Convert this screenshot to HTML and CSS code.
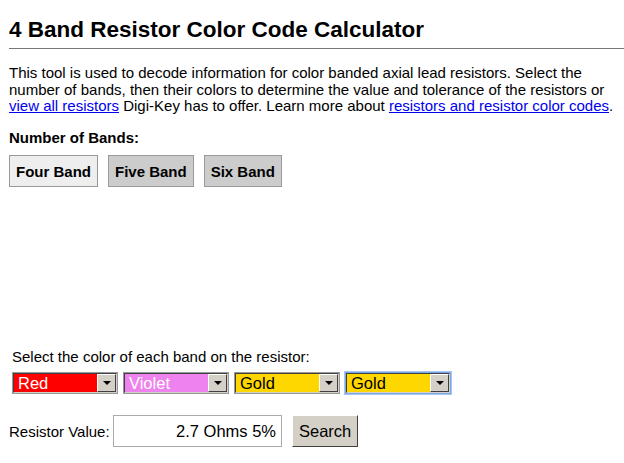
FILE: index.html
```html
<!DOCTYPE html>
<html lang="en">
<head>
    <meta charset="UTF-8">
    <title>4 Band Resistor Color Code Calculator</title>
    <link rel="stylesheet" href="styles.css">
</head>
<body>
    <div class="page">
        <h1 class="title">4 Band Resistor Color Code Calculator</h1>

        <p class="intro">This tool is used to decode information for color banded axial lead resistors. Select the number of bands, then their colors to determine the value and tolerance of the resistors or <a href="#">view all resistors</a> Digi-Key has to offer. Learn more about <a href="#">resistors and resistor color codes</a>.</p>

        <div class="bands">
            <h2 class="bands-label">Number of Bands:</h2>
            <div class="band-buttons">
                <button class="band-btn active">Four Band</button>
                <button class="band-btn">Five Band</button>
                <button class="band-btn">Six Band</button>
            </div>
        </div>

        <div class="resistor-area"></div>

        <div class="picker">
            <div class="picker-label">Select the color of each band on the resistor:</div>
            <div class="picker-row">
                <label class="color-select red">
                    <select><option>Red</option></select>
                    <span class="arrow"></span>
                </label>
                <label class="color-select violet">
                    <select><option>Violet</option></select>
                    <span class="arrow"></span>
                </label>
                <label class="color-select gold">
                    <select><option>Gold</option></select>
                    <span class="arrow"></span>
                </label>
                <label class="color-select gold focused">
                    <select><option>Gold</option></select>
                    <span class="arrow"></span>
                </label>
            </div>
        </div>

        <div class="result">
            <span class="result-label">Resistor Value:</span>
            <input class="result-value" type="text" value="2.7 Ohms 5%" readonly>
            <button class="search-btn">Search</button>
        </div>
    </div>
</body>
</html>
```

FILE: styles.css
```css
* {
    margin: 0;
    padding: 0;
    box-sizing: border-box;
}

body {
    background: white;
    color: #000;
    font-family: "Liberation Sans", Arial, sans-serif;
    font-size: 15px;
}

.page {
    padding: 17px 0 0 9px;
}

.title {
    font-size: 22.5px;
    font-weight: bold;
    line-height: 26px;
    padding-bottom: 5px;
    border-bottom: 1px solid #777;
    margin-bottom: 16px;
}

.intro {
    line-height: 16.5px;
    padding-right: 10px;
    margin-bottom: 15.5px;
}

.intro a {
    color: #0000ee;
}

.bands-label {
    font-size: 15px;
    font-weight: bold;
    line-height: 16px;
    margin-bottom: 9px;
}

.band-buttons {
    display: flex;
    gap: 10px;
}

.band-btn {
    font-family: "Liberation Sans", Arial, sans-serif;
    font-size: 15px;
    font-weight: bold;
    height: 32px;
    padding: 0 6px;
    background: #ccc;
    border: 1px solid #999;
    color: #000;
}

.band-btn.active {
    background: #eee;
}

.resistor-area {
    height: 162px;
}

.picker {
    padding-left: 3px;
}

.picker-label {
    line-height: 16px;
    margin-bottom: 7px;
}

.picker-row {
    display: flex;
    gap: 5px;
}

.color-select {
    position: relative;
    display: block;
    width: 106px;
    height: 22px;
    border: 1px solid #999;
}

.color-select select {
    appearance: none;
    width: 100%;
    height: 100%;
    border: 1px solid #404040;
    border-right-color: #d4d0c8;
    border-bottom-color: #d4d0c8;
    font-family: "Liberation Sans", Arial, sans-serif;
    font-size: 16.5px;
    padding-left: 4px;
    outline: none;
}

.color-select.red select {
    background: #ff0000;
    color: #fff;
}

.color-select.violet select {
    background: #ee82ee;
    color: #fff;
}

.color-select.gold select {
    background: #ffd700;
    color: #000;
}

.color-select.focused {
    border-color: #7aa7e8;
    box-shadow: 0 0 0 1px #a9c6f0;
}

.arrow {
    position: absolute;
    top: 1px;
    right: 1px;
    width: 19px;
    height: 18px;
    background: #d4d0c8;
    border: 1px solid;
    border-color: #fff #404040 #404040 #fff;
    pointer-events: none;
}

.arrow::after {
    content: "";
    position: absolute;
    left: 5px;
    top: 6px;
    border-left: 4px solid transparent;
    border-right: 4px solid transparent;
    border-top: 4px solid #000;
}

.result {
    display: flex;
    align-items: center;
    margin-top: 21px;
}

.result-label {
    width: 104px;
}

.result-value {
    width: 169px;
    height: 32px;
    border: 1px solid #aaa;
    font-family: "Liberation Sans", Arial, sans-serif;
    font-size: 16.5px;
    text-align: right;
    padding-right: 5px;
    margin-right: 10px;
}

.search-btn {
    height: 32px;
    padding: 0 6px;
    background: #d4d0c8;
    border: 1px solid;
    border-color: #fff #404040 #404040 #fff;
    font-family: "Liberation Sans", Arial, sans-serif;
    font-size: 16.5px;
    color: #000;
}
```
